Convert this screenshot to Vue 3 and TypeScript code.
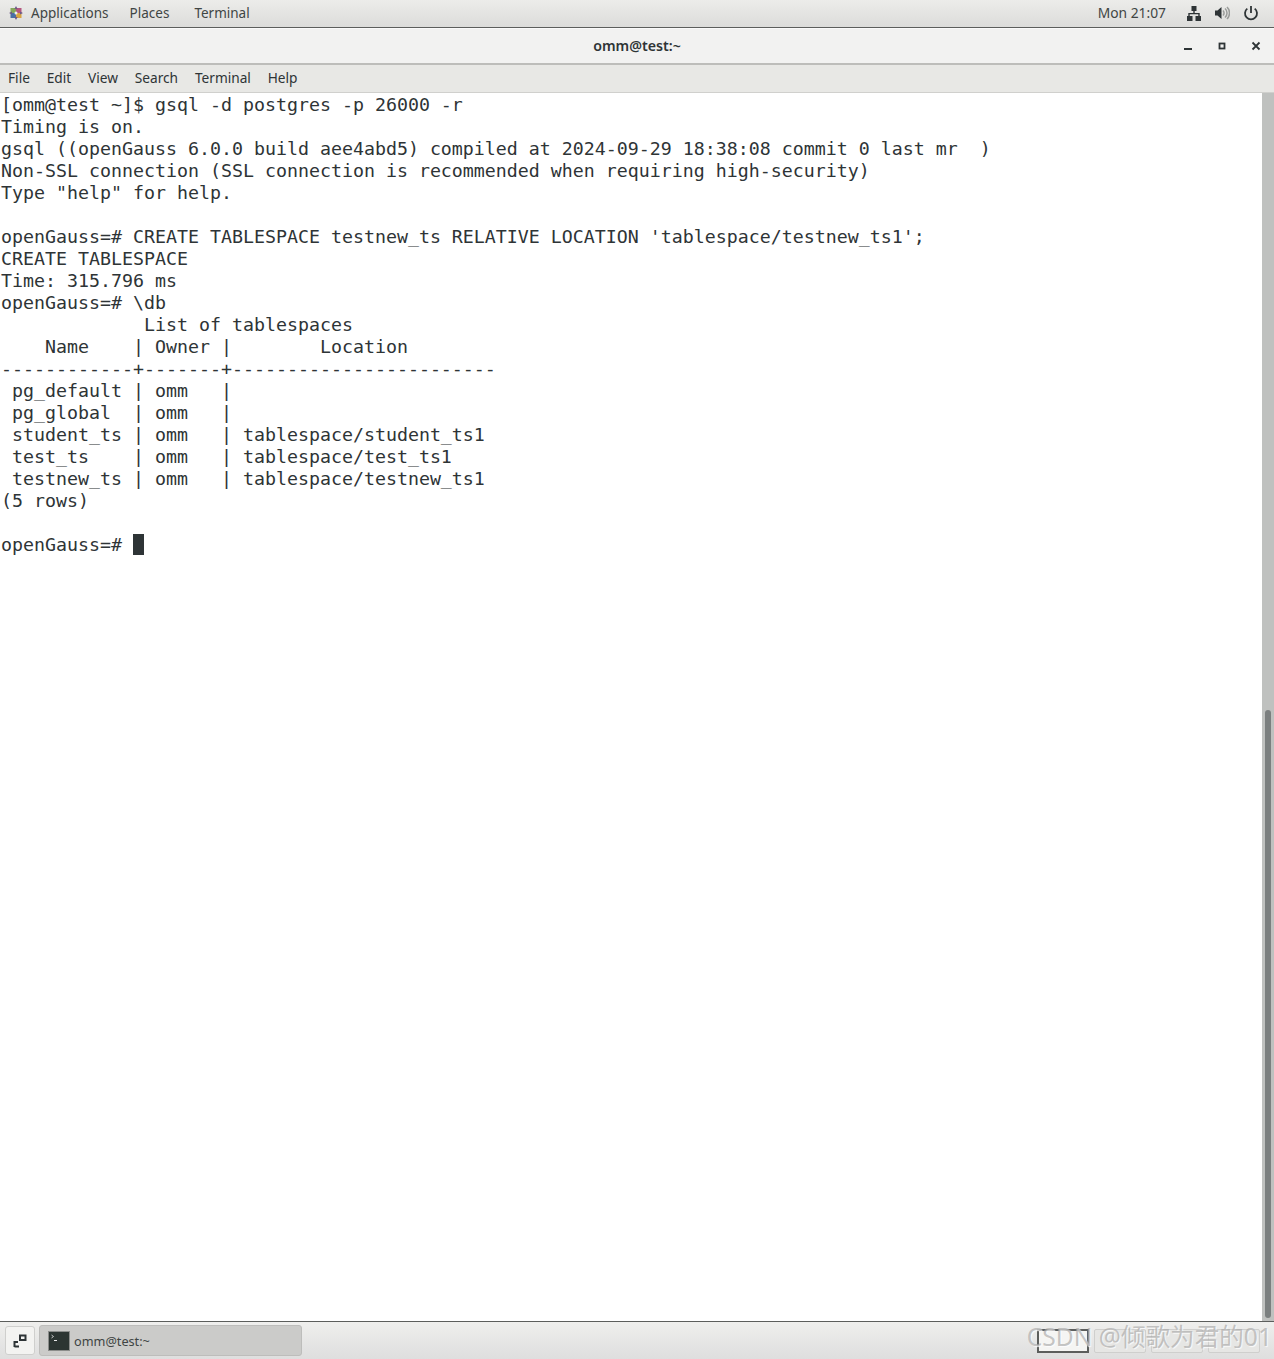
<script setup lang="ts">
const menus: string[] = ['File', 'Edit', 'View', 'Search', 'Terminal', 'Help']
const lines: string[] = [
  '[omm@test ~]$ gsql -d postgres -p 26000 -r',
  'Timing is on.',
  'gsql ((openGauss 6.0.0 build aee4abd5) compiled at 2024-09-29 18:38:08 commit 0 last mr  )',
  'Non-SSL connection (SSL connection is recommended when requiring high-security)',
  'Type "help" for help.',
  '',
  "openGauss=# CREATE TABLESPACE testnew_ts RELATIVE LOCATION 'tablespace/testnew_ts1';",
  'CREATE TABLESPACE',
  'Time: 315.796 ms',
  'openGauss=# \\db',
  '             List of tablespaces',
  '    Name    | Owner |        Location',
  '------------+-------+------------------------',
  ' pg_default | omm   | ',
  ' pg_global  | omm   | ',
  ' student_ts | omm   | tablespace/student_ts1',
  ' test_ts    | omm   | tablespace/test_ts1',
  ' testnew_ts | omm   | tablespace/testnew_ts1',
  '(5 rows)',
  '',
]
</script>

<template>
  <div class="screen">
    <header class="topbar">
      <div class="top-left">
        <svg class="logo" width="16" height="16" viewBox="0 0 16 16">
          <rect x="2.500" y="3" width="5.500" height="5" fill="#86a85a" />
          <rect x="8" y="3" width="5.500" height="5" fill="#b4577f" />
          <rect x="2.500" y="8" width="5.500" height="5" fill="#4a6fa5" />
          <rect x="8" y="8" width="5.500" height="5" fill="#d9a441" />
          <path d="M8 1l1.600 3H6.400zM8 15l-1.600-3h3.200zM1 8l3-1.600v3.200zM15 8l-3 1.600V6.400z" fill="#6d5a86" />
          <circle cx="8" cy="8" r="1.500" fill="#efefef" />
        </svg>
        <span class="app-label">Applications</span>
        <span class="places">Places</span>
        <span class="term-label">Terminal</span>
      </div>
      <div class="top-right">
        <span class="clock">Mon 21:07</span>
        <svg class="net" width="16" height="16" viewBox="0 0 16 16" fill="#2e3436">
          <rect x="5.500" y="1" width="5" height="5" />
          <rect x="1" y="11" width="5.500" height="5" />
          <rect x="9.500" y="11" width="5.500" height="5" />
          <path d="M7.300 5h1.400v3h5v3h-1.400V9.300H3.700V11H2.300V8h5z" />
        </svg>
        <svg class="vol" width="16" height="16" viewBox="0 0 16 16">
          <path d="M1 5.500h2.500L7.500 2v12l-4-3.500H1z" fill="#2e3436" />
          <path d="M9 5.500a3.500 3.500 0 0 1 0 5M11 3.500a6 6 0 0 1 0 9M13 2a8.500 8.500 0 0 1 0 12" fill="none" stroke="#9a9c9a" stroke-width="1.500" />
        </svg>
        <svg class="power" width="16" height="16" viewBox="0 0 16 16" fill="none" stroke="#2e3436" stroke-width="1.800">
          <path d="M8 1v7" />
          <path d="M4.300 3.600a6 6 0 1 0 7.400 0" />
        </svg>
      </div>
    </header>

    <div class="titlebar">
      <span class="title">omm@test:~</span>
      <div class="win-buttons">
        <svg width="10" height="10" viewBox="0 0 10 10"><rect x="1" y="7" width="8" height="2" fill="#2e3436" /></svg>
        <svg width="10" height="10" viewBox="0 0 10 10"><rect x="2.500" y="2.500" width="5" height="5" fill="none" stroke="#2e3436" stroke-width="1.800" /></svg>
        <svg width="10" height="10" viewBox="0 0 10 10"><path d="M1.500 1.500l7 7M8.500 1.500l-7 7" stroke="#2e3436" stroke-width="1.800" /></svg>
      </div>
    </div>

    <nav class="menubar">
      <span v-for="m in menus" :key="m" class="menu-item">{{ m }}</span>
    </nav>

    <main class="terminal">
      <div class="term-text">
        <div v-for="(l, i) in lines" :key="i" class="line">{{ l }}</div>
        <div class="line">openGauss=# <span class="cursor"> </span></div>
      </div>
      <div class="scrolltrack"><div class="scrollthumb"></div></div>
    </main>

    <footer class="taskbar">
      <div class="task-left">
        <button class="show-desktop">
          <svg width="14" height="14" viewBox="0 0 14 14" fill="none" stroke="#2e3436" stroke-width="2">
            <rect x="7" y="1.500" width="5.500" height="4.500" />
            <path d="M1.500 13V8H5M6 12.500H1.500" />
          </svg>
        </button>
        <div class="task-item">
          <svg width="22" height="20" viewBox="0 0 22 20">
            <rect x="0.500" y="0.500" width="21" height="19" fill="#2c3532" stroke="#8b8d8b" />
            <path d="M3.500 4l2 1.500-2 1.500" fill="none" stroke="#e8e8e8" stroke-width="0.800" />
            <rect x="6" y="9" width="3" height="1" fill="#e8e8e8" />
          </svg>
          <span>omm@test:~</span>
        </div>
      </div>
      <div class="pager">
        <span class="ws active"></span>
        <span class="ws"></span>
        <span class="ws"></span>
        <span class="ws"></span>
      </div>
      <span class="watermark">CSDN @倾歌为君的01</span>
    </footer>
  </div>
</template>

<style scoped>
.screen {
  width: 1274px;
  height: 1359px;
  display: flex;
  flex-direction: column;
  overflow: hidden;
  font-family: "Noto Sans", "Open Sans", sans-serif;
  color: #2e3436;
  background: #fff;
  position: relative;
}
.topbar {
  height: 25px;
  padding-bottom: 2px;
  flex: none;
  box-sizing: content-box;
  border-bottom: 1px solid #5c5e5c;
  background: linear-gradient(#ececea, #dcdcda);
  display: flex;
  justify-content: space-between;
  align-items: center;
  font-size: 13.500px;
  color: #404544;
}
.top-left { display: flex; align-items: center; padding-left: 8px; }
.logo { margin-right: 7px; }
.places { margin-left: 21px; }
.term-label { margin-left: 25px; }
.top-right { display: flex; align-items: center; }
.clock { margin-right: 20px; font-size: 13.800px; }
.net { margin-right: 12px; }
.vol { margin-right: 13px; }
.power { margin-right: 15px; }
.titlebar {
  height: 32px;
  padding-bottom: 2px;
  flex: none;
  border-top: 1px solid #fafafa;
  border-bottom: 2px solid #bdbdba;
  background: #f2f2f1;
  display: flex;
  align-items: center;
  justify-content: center;
  position: relative;
}
.title { font-size: 14.200px; font-weight: 600; color: #2e3436; }
.win-buttons {
  position: absolute;
  right: 13px;
  top: 12px;
  display: flex;
  gap: 24px;
}
.menubar {
  height: 25px;
  padding-bottom: 2px;
  flex: none;
  background: #e8e8e5;
  border-bottom: 1px solid #d0d0cd;
  display: flex;
  align-items: center;
  padding-left: 8px;
  gap: 16.800px;
  font-size: 13.700px;
}
.terminal {
  flex: 1;
  display: flex;
  min-height: 0;
  background: #fff;
}
.term-text {
  flex: 1;
  padding-top: 1px;
  padding-left: 1px;
  font-family: "DejaVu Sans Mono", monospace;
  font-size: 18.270px;
  line-height: 22px;
  color: #2e3436;
}
.line { white-space: pre; height: 22px; }
.cursor {
  display: inline-block;
  width: 11px;
  height: 21px;
  background: #2e3436;
  vertical-align: top;
}
.scrolltrack {
  width: 12px;
  box-sizing: border-box;
  flex: none;
  background: #bfc1bf;
  display: flex;
  flex-direction: column;
  align-items: center;
  padding-top: 617px;
  padding-bottom: 3px;
}
.scrollthumb {
  width: 6px;
  flex: 1;
  background: #7b7f7f;
  border-radius: 3px;
}
.taskbar {
  height: 37px;
  flex: none;
  border-top: 1px solid #5c5e5c;
  background: linear-gradient(#efefed, #dedede);
  display: flex;
  align-items: center;
  justify-content: space-between;
  position: relative;
}
.task-left { display: flex; align-items: center; padding-left: 5px; gap: 4px; }
.show-desktop {
  width: 30px;
  height: 29px;
  padding: 0;
  background: #f3f3f1;
  border: 1px solid #cfcfcd;
  border-radius: 3px;
  display: flex;
  align-items: center;
  justify-content: center;
}
.task-item {
  width: 263px;
  height: 31px;
  box-sizing: border-box;
  background: #cbcbc9;
  border: 1px solid #bdbdbb;
  border-radius: 3px;
  display: flex;
  align-items: center;
  padding-left: 8px;
  gap: 4px;
  font-size: 12.700px;
  color: #404544;
}
.pager { display: flex; gap: 5px; padding-right: 14px; }
.ws {
  width: 52px;
  height: 24px;
  box-sizing: border-box;
  border: 1px solid #cfcfcd;
  border-radius: 2px;
  background: #e6e6e4;
}
.ws.active {
  background: #f5f5f3;
  border: 2px solid #5c5e5c;
  border-radius: 0;
}
.watermark {
  position: absolute;
  right: 2px;
  top: -2px;
  font-family: "Noto Sans", "Noto Sans CJK SC", sans-serif;
  font-size: 24.600px;
  line-height: 33px;
  color: rgba(165, 165, 165, 0.65);
  text-shadow: 1px 1px 1px rgba(255, 255, 255, 0.8);
  white-space: nowrap;
}
</style>
